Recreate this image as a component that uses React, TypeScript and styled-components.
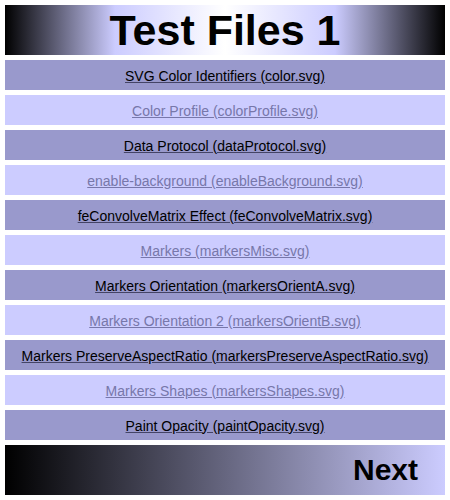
import React from 'react';
import styled, { createGlobalStyle, css } from 'styled-components';

const GlobalStyle = createGlobalStyle`
  body {
    margin: 0;
    background: #ffffff;
    font-family: "Liberation Sans", Arial, sans-serif;
  }
`;

const Page = styled.div`
  width: 450px;
  height: 500px;
  padding: 5px;
  box-sizing: border-box;
  display: flex;
  flex-direction: column;
  gap: 5px;
`;

const Header = styled.div`
  height: 50px;
  display: flex;
  align-items: center;
  justify-content: center;
  background: linear-gradient(to right, #000000, #ccccff 25%, #ffffff 50%, #ccccff 75%, #000000);
  font-size: 43px;
  font-weight: bold;
  color: #000000;
`;

const List = styled.div`
  display: flex;
  flex-direction: column;
  gap: 5px;
`;

const Row = styled.a<{ $dark: boolean }>`
  height: 30px;
  box-sizing: border-box;
  padding-top: 1px;
  display: flex;
  align-items: center;
  justify-content: center;
  font-size: 14px;
  text-decoration: underline;
  cursor: pointer;
  ${({ $dark }) =>
    $dark
      ? css`
          background: #9999cc;
          color: #000000;
          text-decoration-color: #444466;
        `
      : css`
          background: #ccccff;
          color: #7777aa;
        `}
`;

const Footer = styled.div`
  height: 50px;
  display: flex;
  align-items: center;
  justify-content: flex-end;
  padding-right: 27px;
  background: linear-gradient(to right, #000000, #ccccff);
  font-size: 30px;
  font-weight: bold;
  color: #000000;
`;

const files = [
  'SVG Color Identifiers (color.svg)',
  'Color Profile (colorProfile.svg)',
  'Data Protocol (dataProtocol.svg)',
  'enable-background (enableBackground.svg)',
  'feConvolveMatrix Effect (feConvolveMatrix.svg)',
  'Markers (markersMisc.svg)',
  'Markers Orientation (markersOrientA.svg)',
  'Markers Orientation 2 (markersOrientB.svg)',
  'Markers PreserveAspectRatio (markersPreserveAspectRatio.svg)',
  'Markers Shapes (markersShapes.svg)',
  'Paint Opacity (paintOpacity.svg)',
];

const App = (): React.ReactElement => (
  <>
    <GlobalStyle />
    <Page>
      <Header>Test Files 1</Header>
      <List>
        {files.map((name, i) => (
          <Row key={name} $dark={i % 2 === 0}>
            {name}
          </Row>
        ))}
      </List>
      <Footer>Next</Footer>
    </Page>
  </>
);

export default App;
